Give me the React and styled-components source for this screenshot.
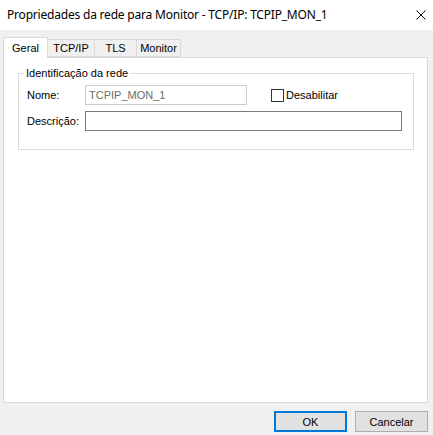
import React from "react";
import styled, { createGlobalStyle } from "styled-components";

const Global = createGlobalStyle`
  html, body { margin: 0; padding: 0; background: #f0f0f0; }
  * { box-sizing: border-box; }
`;

const Window = styled.div`
  width: 433px;
  height: 435px;
  background: #f0f0f0;
  display: flex;
  flex-direction: column;
  font-family: "Liberation Sans", Arial, sans-serif;
  font-size: 11px;
  color: #000;
  overflow: hidden;
`;

const TitleBar = styled.div`
  height: 30px;
  flex: none;
  background: #fff;
  display: flex;
  align-items: center;
  justify-content: space-between;
  padding: 0 7px 0 7px;
`;

const Title = styled.div`
  font-family: "Noto Sans", "Open Sans", sans-serif;
  font-size: 12px;
  letter-spacing: -0.2px;
  color: #000;
  margin-top: -1px;
`;

const CloseButton = styled.div`
  width: 10px;
  height: 10px;
  display: flex;
`;

const Body = styled.div`
  flex: 1;
  display: flex;
  flex-direction: column;
  padding: 7px 5px 3px 3px;
`;

const TabStrip = styled.div`
  display: flex;
  align-items: flex-end;
  height: 20px;
  flex: none;
`;

const Tab = styled.div`
  position: relative;
  display: flex;
  align-items: center;
  justify-content: center;
  width: ${(p) => p.$w}px;
  height: ${(p) => (p.$active ? 21 : 18)}px;
  margin-bottom: ${(p) => (p.$active ? -1 : 0)}px;
  background: ${(p) => (p.$active ? "#fff" : "#f0f0f0")};
  border: 1px solid #d9d9d9;
  border-bottom: ${(p) => (p.$active ? "none" : "1px solid #d9d9d9")};
  border-left: ${(p) => (p.$first ? "1px solid #d9d9d9" : "none")};
  z-index: ${(p) => (p.$active ? 2 : 0)};
  color: #000;
  white-space: nowrap;
`;

const Panel = styled.div`
  height: 346px;
  flex: none;
  background: #fff;
  border: 1px solid #d9d9d9;
  padding: 9px 13px 0 14px;
`;

const Group = styled.fieldset`
  margin: 0;
  padding: 5px 11px 18px 8px;
  border: 1px solid #dcdcdc;
  min-width: 0;
`;

const Legend = styled.legend`
  margin-left: -3px;
  padding: 0 2px;
  line-height: 13px;
  font-size: 11px;
`;

const Row = styled.div`
  display: flex;
  align-items: center;
  height: 20px;
  & + & {
    margin-top: 6px;
  }
`;

const Label = styled.label`
  width: 58px;
  flex: none;
`;

const TextBox = styled.input`
  height: 20px;
  width: ${(p) => (p.$w ? `${p.$w}px` : "auto")};
  flex: ${(p) => (p.$w ? "none" : "1")};
  border: 1px solid ${(p) => (p.$muted ? "#cccccc" : "#7a7a7a")};
  background: #fff;
  color: ${(p) => (p.$muted ? "#6d6d6d" : "#000")};
  font-family: "Liberation Sans", Arial, sans-serif;
  font-size: 11px;
  padding: 0 3px;
  margin: 0;
  outline: none;
  min-width: 0;
`;

const CheckLabel = styled.label`
  display: flex;
  align-items: center;
  margin-left: 24px;
`;

const Box = styled.span`
  width: 13px;
  height: 13px;
  border: 1px solid #333;
  background: #fff;
  margin-right: 2px;
  margin-top: 1px;
`;

const ButtonRow = styled.div`
  display: flex;
  justify-content: flex-end;
  gap: 8px;
  margin-top: 8px;
`;

const Button = styled.button`
  width: 73px;
  height: 21px;
  margin: 0;
  padding: 0;
  background: #e1e1e1;
  border: ${(p) => (p.$default ? "2px solid #0078d7" : "1px solid #adadad")};
  font-family: "Liberation Sans", Arial, sans-serif;
  font-size: 11px;
  color: #000;
`;

const tabs = [
  { label: "Geral", w: 45, active: true },
  { label: "TCP/IP", w: 47 },
  { label: "TLS", w: 42 },
  { label: "Monitor", w: 44 },
];

export default function App() {
  return (
    <Window>
      <Global />
      <TitleBar>
        <Title>Propriedades da rede para Monitor - TCP/IP: TCPIP_MON_1</Title>
        <CloseButton>
          <svg width="10" height="10" viewBox="0 0 10 10">
            <path d="M0.5 0.5 L9.5 9.5 M9.5 0.5 L0.5 9.5" stroke="#000" strokeWidth="1" fill="none" />
          </svg>
        </CloseButton>
      </TitleBar>
      <Body>
        <TabStrip>
          {tabs.map((t, i) => (
            <Tab key={t.label} $w={t.w} $active={t.active} $first={i === 0}>
              {t.label}
            </Tab>
          ))}
        </TabStrip>
        <Panel>
          <Group>
            <Legend>Identificação da rede</Legend>
            <Row>
              <Label>Nome:</Label>
              <TextBox $w={162} $muted readOnly value="TCPIP_MON_1" />
              <CheckLabel>
                <Box />
                Desabilitar
              </CheckLabel>
            </Row>
            <Row>
              <Label>Descrição:</Label>
              <TextBox readOnly value="" />
            </Row>
          </Group>
        </Panel>
        <ButtonRow>
          <Button $default>OK</Button>
          <Button>Cancelar</Button>
        </ButtonRow>
      </Body>
    </Window>
  );
}
